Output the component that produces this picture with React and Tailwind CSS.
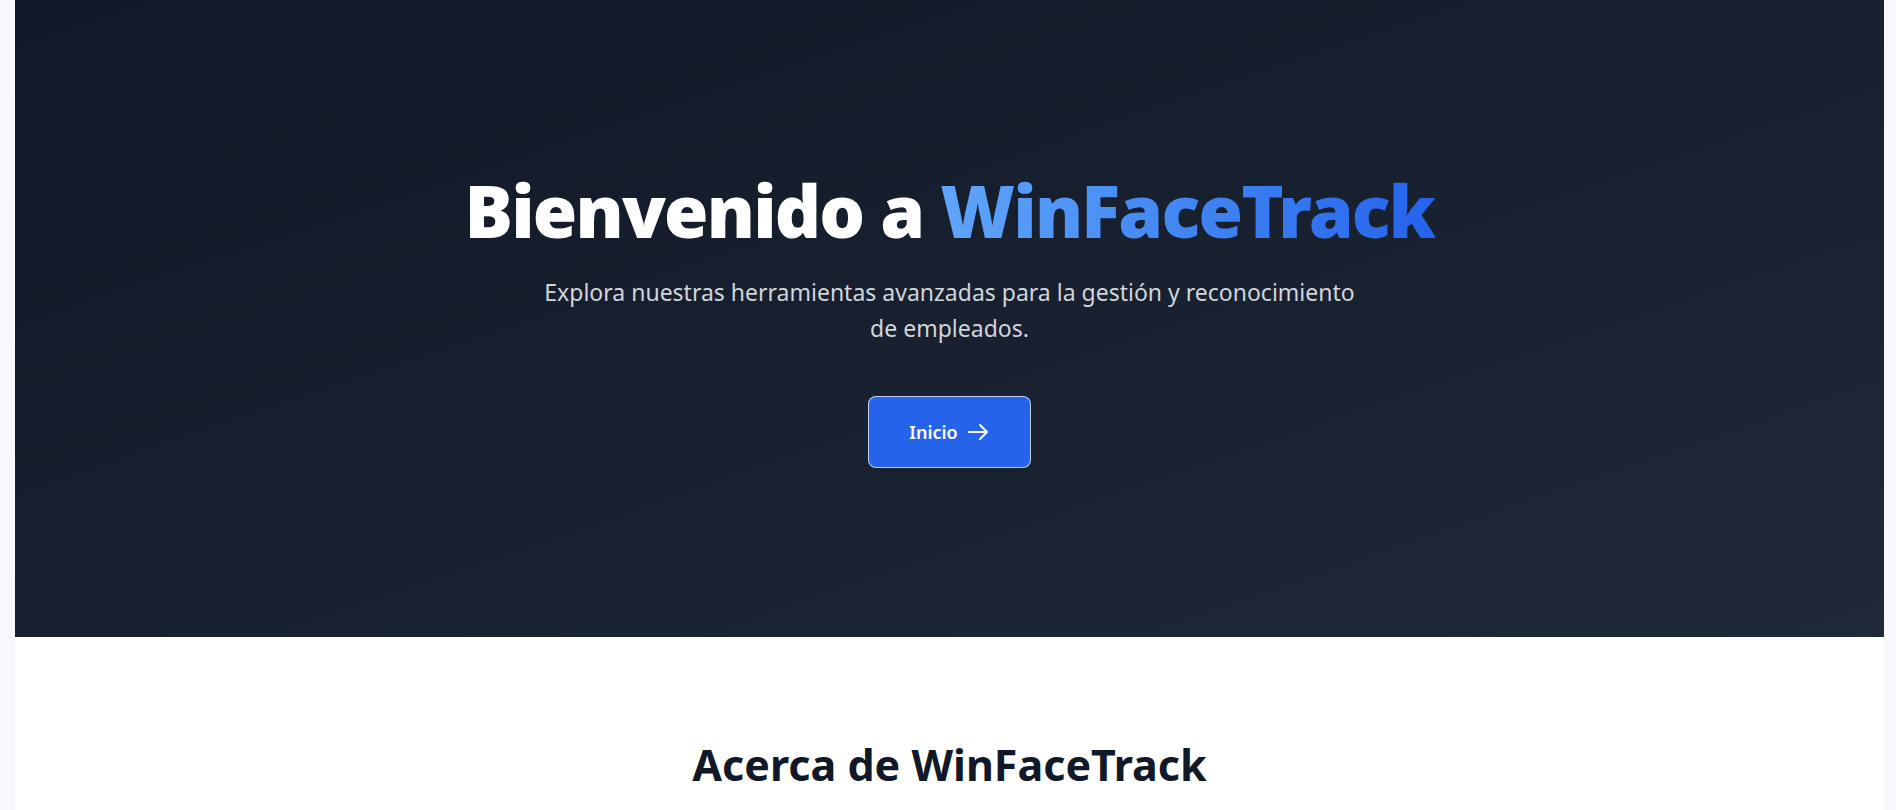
import React from "react";

function ArrowIcon() {
  return (
    <svg
      viewBox="0 0 24 24"
      fill="none"
      stroke="currentColor"
      strokeWidth="2"
      strokeLinecap="round"
      strokeLinejoin="round"
      className="w-6 h-6"
    >
      <path d="M14 5l7 7m0 0l-7 7m7-7H3" />
    </svg>
  );
}

export default function App() {
  return (
    <div
      className="min-h-screen bg-[#f8f9fc] pl-[15px] pr-[12px]"
      style={{ fontFamily: '"Noto Sans", "Open Sans", sans-serif' }}
    >
      <main className="bg-white">
        <section className="h-[637px] bg-gradient-to-br from-[#111827] to-[#1f2937] flex flex-col items-center justify-center text-center px-6 pt-1">
          <h1 className="text-[72px] leading-none font-black tracking-tight text-white">
            Bienvenido a{" "}
            <span className="bg-gradient-to-r from-[#60a5fa] to-[#2563eb] bg-clip-text text-transparent">
              WinFaceTrack
            </span>
          </h1>
          <p className="mt-7 max-w-[840px] text-[23px] leading-9 text-[#d1d5db]">
            Explora nuestras herramientas avanzadas para la gestión y
            reconocimiento de empleados.
          </p>
          <button className="mt-[50px] h-[72px] px-10 inline-flex items-center gap-2 rounded-lg border border-white/70 bg-[#2563eb] text-lg font-semibold text-white">
            Inicio
            <ArrowIcon />
          </button>
        </section>
        <section className="pt-[106px] pb-24 text-center">
          <h2 className="text-[43px] leading-none font-bold text-[#111827]">
            Acerca de WinFaceTrack
          </h2>
        </section>
      </main>
    </div>
  );
}
